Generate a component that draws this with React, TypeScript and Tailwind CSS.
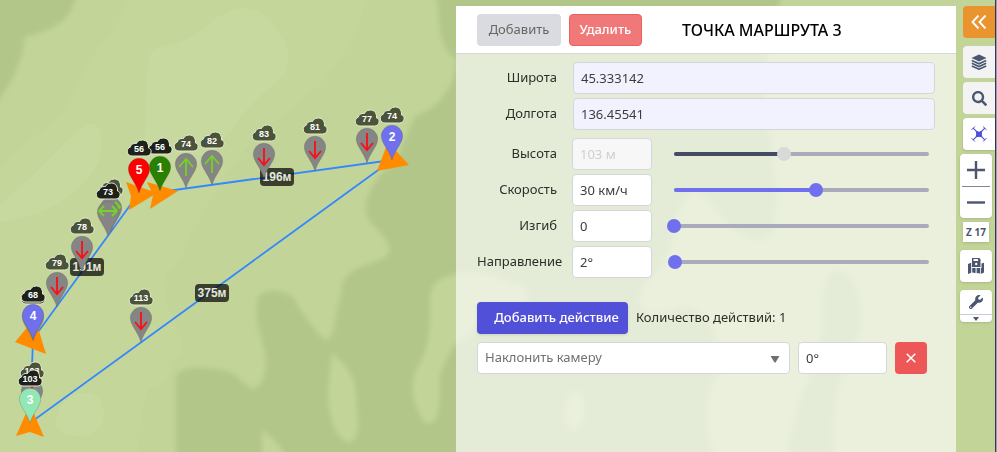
import { useState } from "react";
import type { ReactNode } from "react";
import { FaSearch, FaWrench } from "react-icons/fa";

const CLOUD =
  "M-7 7H7.500C13 7 13.500 -0.500 9.500 -1C10 -7 6 -9.800 2 -8.800C-0.500 -8.800 -1.500 -7 -2.500 -5.500C-6 -6 -8.500 -4 -8.500 -2C-13.500 -0.500 -12.500 7 -7 7Z";
const DROP =
  "M0 0C-3.500 -11 -10.700 -17 -10.700 -24A10.700 10.700 0 0 1 10.700 -24C10.700 -17 3.500 -11 0 0Z";

type Heading = "up" | "down" | "both";

interface Pin {
  x: number;
  y: number;
  height: string;
  fill?: string;
  label?: string;
  heading?: Heading;
  dark?: boolean;
}

const PINS: Pin[] = [
  { x: 186, y: 188, height: "74", heading: "up" },
  { x: 212, y: 185, height: "82", heading: "up" },
  { x: 264, y: 178, height: "83", heading: "down" },
  { x: 315, y: 171, height: "81", heading: "down" },
  { x: 367, y: 163, height: "77", heading: "down" },
  { x: 392, y: 160, height: "74", fill: "#7070ee", label: "2" },
  { x: 160, y: 191, height: "56", fill: "#2a8000", label: "1", dark: true },
  { x: 139, y: 193, height: "56", fill: "#ff0000", label: "5", dark: true },
  { x: 111, y: 232, height: "73", heading: "both" },
  { x: 108, y: 236, height: "73", heading: "both", dark: true },
  { x: 82, y: 271, height: "78", heading: "down" },
  { x: 57, y: 307, height: "79", heading: "down" },
  { x: 33, y: 341, height: "68", heading: "down" },
  { x: 33, y: 339, height: "68", fill: "#7070ee", label: "4", dark: true },
  { x: 141, y: 342, height: "113", heading: "down" },
  { x: 32, y: 415, height: "103", heading: "down" },
  { x: 30, y: 423, height: "103", fill: "#92e8b4", label: "3", dark: true },
];

const DISTANCES = [
  { x: 277, y: 177, text: "196м" },
  { x: 87, y: 267, text: "191м" },
  { x: 212, y: 293, text: "375м" },
];

const ARROWS = [
  "M126 182L157 193L129 210L131 196Z",
  "M147 182L178 191L150 209L153 195Z",
  "M388 142L409 165L377 171Z",
  "M35 318L46 354L15 342Z",
  "M30 404L44 437L30 432L16 436Z",
];

const HEADING_PATHS: Record<Heading, string> = {
  up: "M0 -12V-29M-7 -21L0 -29L7 -21",
  down: "M0 -30V-13M-6 -20L0 -13L6 -20",
  both: "M-9 -25H9M-4 -30L-9 -25L-4 -20M4 -30L9 -25L4 -20",
};

function MapPin({ pin }: { pin: Pin }) {
  return (
    <g transform={`translate(${pin.x} ${pin.y})`}>
      <path d={DROP} fill={pin.fill ?? "#858585"} stroke="#55555588" strokeWidth="0.500" />
      {pin.heading && (
        <path
          d={HEADING_PATHS[pin.heading]}
          fill="none"
          stroke={pin.heading === "down" ? "#fa0f14" : "#74d420"}
          strokeWidth="1.800"
        />
      )}
      {pin.label && (
        <text y="-19" textAnchor="middle" fontSize="12" fontWeight="700" fill="#fff">
          {pin.label}
        </text>
      )}
      <g transform="translate(0 -44)">
        <path
          d={CLOUD}
          fill={pin.dark ? "#1d211a" : "#4b533b"}
          stroke="#e4ead2"
          strokeWidth="1"
        />
        <text y="3" textAnchor="middle" fontSize="9" fontWeight="700" fill="#fff">
          {pin.height}
        </text>
      </g>
    </g>
  );
}

function RouteMap() {
  return (
    <svg
      className="absolute inset-0 h-full w-full font-['Liberation_Sans',sans-serif]"
      viewBox="0 0 997 452"
      preserveAspectRatio="xMinYMin slice"
      role="img"
      aria-label="Карта маршрута"
    >
      <defs>
        <filter id="soft" x="-10%" y="-10%" width="120%" height="120%">
          <feGaussianBlur stdDeviation="2.500" />
        </filter>
      </defs>
      <rect width="997" height="452" fill="#c2d498" />
      <path
        fill="#c5d69b"
        d="M126 0C120 30 100 45 93 56L66 108C50 130 20 140 0 170V452H138C142 430 140 400 150 388C170 385 170 375 173 360C184 358 184 345 180 330C165 310 160 280 170 270C190 255 185 235 200 220C215 190 240 150 270 125C320 90 350 60 366 0Z"
      />
      <path
        fill="#c8d9a0"
        d="M153 50C165 45 180 45 195 35C215 20 225 8 245 8C270 10 275 32 285 42C295 70 280 80 265 92C235 115 225 150 190 170H140C150 120 142 90 150 55Z"
      />
      <path
        fill="#c8d9a0"
        d="M0 205C30 180 60 145 85 125C105 118 105 145 98 165C75 200 45 215 0 222ZM55 425C58 395 85 385 100 400C110 420 100 435 80 436C65 436 58 432 55 425Z"
      />
      <g filter="url(#soft)">
        <path
          fill="#b3c68a"
          d="M-9 -9H78C70 20 60 28 25 37C22 60 15 80 -9 110Z"
        />
        <path
          fill="#b3c68a"
          d="M436 -9C440 15 436 45 456 60C456 85 440 108 415 116L395 162C370 180 360 205 370 222C395 245 393 255 380 260C350 270 342 275 341 295C334 315 336 340 325 340C310 325 300 310 295 300C285 288 262 288 258 298C252 320 265 345 266 360C265 380 260 390 250 388C240 380 235 372 222 370C200 366 175 366 176 380V462H718C700 430 706 400 718 370C720 330 705 305 680 308C640 325 630 300 648 280C670 265 680 215 705 195C725 225 750 250 770 235C785 200 770 150 765 100C762 70 770 20 785 -9Z"
        />
        <path
          fill="#c2d498"
          d="M456 274C430 280 430 290 430 310C430 345 425 355 415 372C410 390 415 415 428 424C440 422 440 405 440 375C450 350 455 340 470 335C480 320 485 305 525 308C530 290 528 283 515 284C500 278 485 270 456 274ZM332 353C345 365 355 375 356 395C358 420 360 440 350 442C335 440 328 415 328 390ZM262 430C270 435 285 450 288 462H262ZM575 390C590 395 585 430 572 432C560 420 565 400 575 390ZM695 190C710 205 720 240 712 270C695 285 675 280 672 250C672 220 680 200 695 190Z"
        />
        <path
          fill="#b3c68a"
          d="M832 272C850 265 860 285 862 325C850 360 828 385 835 462H788C790 420 805 385 818 360C828 330 815 290 832 272Z"
        />
      </g>
      <path
        d="M160 192L392 160L30 423L33 339L139 193"
        fill="none"
        stroke="#3388ff"
        strokeWidth="1.800"
      />
      {ARROWS.map((d) => (
        <path key={d} d={d} fill="#ff8c00" />
      ))}
      {DISTANCES.map((label) => (
        <g key={label.text} transform={`translate(${label.x} ${label.y})`}>
          <rect x="-17" y="-9" width="34" height="18" rx="4" fill="#000" fillOpacity="0.700" />
          <text y="4" textAnchor="middle" fontSize="12" fontWeight="700" fill="#e4e8dc">
            {label.text}
          </text>
        </g>
      ))}
      {PINS.map((pin, index) => (
        <MapPin key={index} pin={pin} />
      ))}
    </svg>
  );
}

const FIELD =
  "h-8 min-w-0 rounded border border-[#d4d6dc] bg-white px-[7px] text-[13px] text-[#3c3c3c] outline-none";

function CoordinateRow({ id, label, value }: { id: string; label: string; value: string }) {
  return (
    <div className="flex items-center">
      <label htmlFor={id} className="w-20 shrink-0 text-right">
        {label}
      </label>
      <input
        id={id}
        defaultValue={value}
        className="ml-4 h-8 min-w-0 flex-1 rounded border border-[#d4d6dc] bg-[#f2f2fe] px-[7px] text-[13px] text-[#3c3c3c] outline-none"
      />
    </div>
  );
}

interface SliderRowProps {
  id: string;
  label: string;
  start: number;
  max: number;
  unit: string;
  disabled?: boolean;
}

function SliderRow({ id, label, start, max, unit, disabled }: SliderRowProps) {
  const [value, setValue] = useState(start);
  return (
    <div className="flex items-center">
      <label htmlFor={id} className="w-20 shrink-0 whitespace-nowrap text-right">
        {label}
      </label>
      <input
        id={id}
        value={`${value}${unit}`}
        readOnly
        disabled={disabled}
        className={`${FIELD} ml-[15px] w-20 disabled:bg-[#f7f7f7] disabled:text-[#cfcfcf]`}
      />
      <div className="relative ml-[22px] mr-[6px] h-1 flex-1 rounded-full bg-[#a9abbd]">
        <div
          className={`h-1 rounded-full ${disabled ? "bg-[#454b63]" : "bg-[#7070ee]"}`}
          style={{ width: `${(value / max) * 100}%` }}
        />
        <input
          type="range"
          aria-label={label}
          min={0}
          max={max}
          value={value}
          disabled={disabled}
          onChange={(event) => setValue(Number(event.target.value))}
          className="absolute -inset-x-[7px] -top-[5px] m-0 h-[14px] appearance-none bg-transparent [&::-webkit-slider-thumb]:size-[14px] [&::-webkit-slider-thumb]:appearance-none [&::-webkit-slider-thumb]:rounded-full [&::-webkit-slider-thumb]:bg-[#7070ee] disabled:[&::-webkit-slider-thumb]:bg-[#d9d9d9]"
        />
      </div>
    </div>
  );
}

function RoutePointPanel() {
  return (
    <section className="flex w-[500px] flex-col bg-white/65 backdrop-blur-[2px]">
      <header className="flex h-12 items-center gap-2 border-b border-[#d6d8d6] bg-white px-[21px]">
        <button
          type="button"
          className="h-8 w-[84px] rounded bg-[#dadbe0] text-[13px] text-[#666666]"
        >
          Добавить
        </button>
        <button
          type="button"
          className="h-8 w-[73px] rounded border border-[#ec6060] bg-[#f07878] text-[13px] font-medium text-white"
        >
          Удалить
        </button>
        <h1 className="ml-8 whitespace-nowrap text-base font-medium text-black">
          ТОЧКА МАРШРУТА 3
        </h1>
      </header>
      <form className="px-[21px] pt-2 text-[13px] text-[#2c2e28]">
        <div className="flex flex-col gap-1">
          <CoordinateRow id="lat" label="Широта" value="45.333142" />
          <CoordinateRow id="lon" label="Долгота" value="136.45541" />
        </div>
        <div className="mt-2 flex flex-col gap-1">
          <SliderRow id="altitude" label="Высота" start={103} max={239} unit=" м" disabled />
          <SliderRow id="speed" label="Скорость" start={30} max={54} unit=" км/ч" />
          <SliderRow id="curve" label="Изгиб" start={0} max={100} unit="" />
          <SliderRow id="direction" label="Направление" start={2} max={360} unit="°" />
        </div>
        <div className="mt-6 flex items-center gap-2">
          <button
            type="button"
            className="h-8 w-[151px] whitespace-nowrap rounded bg-[#5050d8] pl-2 text-[13px] font-medium text-white shadow"
          >
            Добавить действие
          </button>
          <p className="whitespace-nowrap">Количество действий: 1</p>
        </div>
        <div className="mt-2 mr-2 flex gap-2">
          <div className="relative min-w-0 flex-1">
            <select
              aria-label="Действие"
              className="h-8 w-full appearance-none rounded border border-[#d4d6dc] bg-white px-[7px] text-[13px] text-[#707070] outline-none"
            >
              <option>Наклонить камеру</option>
            </select>
            <svg
              viewBox="0 0 10 7"
              className="pointer-events-none absolute right-[10px] top-[14px] h-[7px] w-[10px]"
              aria-hidden="true"
            >
              <path d="M0.500 0H9.500L5.500 6.500H4.500Z" fill="#707070" />
            </svg>
          </div>
          <input aria-label="Угол камеры" defaultValue="0°" className={`${FIELD} w-[89px]`} />
          <button
            type="button"
            aria-label="Удалить действие"
            className="flex size-8 items-center justify-center rounded bg-[#ed5757]"
          >
            <svg viewBox="0 0 10 10" className="size-[10px]" aria-hidden="true">
              <path d="M0.700 0.700L9.300 9.300M9.300 0.700L0.700 9.300" stroke="#fff" strokeWidth="1.500" />
            </svg>
          </button>
        </div>
      </form>
    </section>
  );
}

function TabButton({
  label,
  className,
  children,
}: {
  label: string;
  className: string;
  children: ReactNode;
}) {
  return (
    <button
      type="button"
      aria-label={label}
      className={`flex size-8 items-center justify-center rounded-l ${className}`}
    >
      {children}
    </button>
  );
}

function Toolbar() {
  return (
    <nav className="flex w-[39px] shrink-0 flex-col items-end gap-1 text-[#4b5670]">
      <TabButton label="Свернуть" className="mb-1 bg-[#ea9430]">
        <svg viewBox="0 0 16 14" className="h-[14px] w-4" fill="none" aria-hidden="true">
          <path d="M7.500 0.500L1.500 7L7.500 13.500M14.500 0.500L8.500 7L14.500 13.500" stroke="#fff" strokeWidth="1.900" />
        </svg>
      </TabButton>
      <TabButton label="Слои" className="bg-[#f3f3f3]">
        <svg viewBox="0 0 16 16" className="size-4" aria-hidden="true">
          <path d="M8 0.500L15.500 4L8 7.500L0.500 4Z" fill="#4b5670" />
          <path
            d="M0.800 6.500L8 9.800L15.200 6.500M0.800 9.200L8 12.500L15.200 9.200M0.800 11.900L8 15.200L15.200 11.900"
            fill="none"
            stroke="#4b5670"
            strokeWidth="1.600"
          />
        </svg>
      </TabButton>
      <TabButton label="Поиск" className="bg-[#f3f3f3]">
        <FaSearch className="size-[15px]" />
      </TabButton>
      <TabButton label="Дрон" className="bg-white shadow">
        <svg viewBox="0 0 16 16" className="size-4" fill="none" stroke="#5050d8" aria-hidden="true">
          <path d="M2.200 2.200L13.800 13.800M13.800 2.200L2.200 13.800" strokeWidth="1.200" />
          <path
            d="M0.500 3.900L3.900 0.500M12.100 0.500L15.500 3.900M0.500 12.100L3.900 15.500M12.100 15.500L15.500 12.100"
            strokeWidth="1"
          />
          <path d="M5.300 5.300L8 6.300L10.700 5.300L10.300 8L10.700 10.700L8 10.300L5.300 10.700L5.700 8Z" fill="#5050d8" />
        </svg>
      </TabButton>
      <div className="mr-[3px] flex w-8 flex-col items-center rounded bg-white shadow">
        <button
          type="button"
          aria-label="Приблизить"
          className="flex h-[33px] w-7 items-center justify-center border-b border-[#7d859a]"
        >
          <svg viewBox="0 0 18 18" className="size-[18px]" aria-hidden="true">
            <path d="M9 0V18M0 9H18" stroke="#4b5670" strokeWidth="2.400" />
          </svg>
        </button>
        <button
          type="button"
          aria-label="Отдалить"
          className="flex h-[31px] w-7 items-center justify-center"
        >
          <svg viewBox="0 0 18 3" className="h-[3px] w-[18px]" aria-hidden="true">
            <path d="M0 1.500H18" stroke="#4b5670" strokeWidth="2.400" />
          </svg>
        </button>
      </div>
      <output className="mr-[6px] flex h-5 w-[26px] items-center justify-center whitespace-nowrap bg-white text-[10px] font-bold shadow">
        Z 17
      </output>
      <button
        type="button"
        aria-label="Сохранить карту"
        className="mr-[3px] mt-1 flex size-8 items-center justify-center rounded bg-white shadow"
      >
        <svg viewBox="0 0 16 16" className="size-4" fill="#4b5670" aria-hidden="true">
          <path d="M4 0H11.200L12.500 1.300V9H4Z" />
          <path d="M5.500 1H10V3H5.500Z" fill="#fff" />
          <circle cx="8.200" cy="6" r="1.200" fill="#fff" />
          <path d="M0 6L3.200 4.700V14.700L0 16ZM16 4.700V14.500L12.800 16V10H13.500V5.500ZM4.200 10H7.600V15L4.200 14.500ZM8.600 10H12V15.500L8.600 15Z" />
        </svg>
      </button>
      <div className="mr-[3px] mt-1 flex w-8 flex-col rounded bg-white shadow">
        <button
          type="button"
          aria-label="Инструменты"
          className="flex h-[25px] items-center justify-center border-b border-[#c9ccd4]"
        >
          <FaWrench className="size-[14px]" />
        </button>
        <button
          type="button"
          aria-label="Ещё инструменты"
          className="flex h-[7px] items-center justify-center"
        >
          <svg viewBox="0 0 6 4" className="h-1 w-[6px]" aria-hidden="true">
            <path d="M0 0H6L3 4Z" fill="#4b5670" />
          </svg>
        </button>
      </div>
    </nav>
  );
}

export default function App() {
  return (
    <main className="relative flex min-h-screen w-full justify-end overflow-hidden border-r border-[#9a9db5] bg-[#c2d498] font-['Noto_Sans','Open_Sans',sans-serif]">
      <RouteMap />
      <div className="relative flex border-r border-[#343850] pt-[6px]">
        <RoutePointPanel />
        <Toolbar />
      </div>
    </main>
  );
}
